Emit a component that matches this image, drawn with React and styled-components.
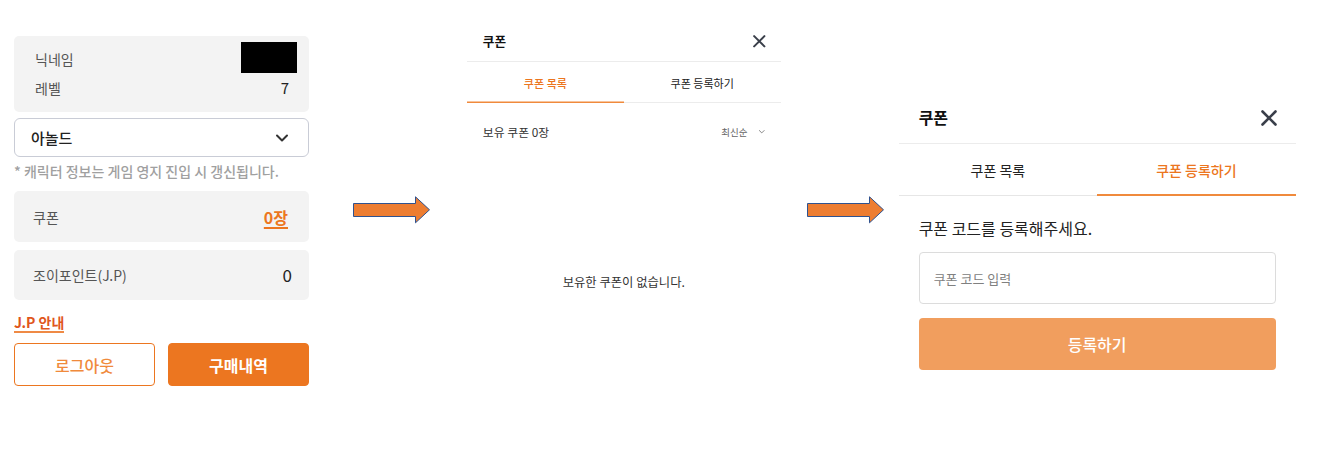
import styled, { createGlobalStyle } from 'styled-components';
import { X, ChevronDown } from 'lucide-react';

const ORANGE = '#ec7620';

const GlobalStyle = createGlobalStyle`
  html, body {
    margin: 0;
    padding: 0;
    background: #fff;
  }
  body {
    font-family: "Noto Sans CJK KR", "Noto Sans", sans-serif;
    color: #222;
  }
  * {
    box-sizing: border-box;
  }
`;

const Page = styled.div`
  display: flex;
  align-items: flex-start;
  width: 1321px;
  height: 456px;
  overflow: hidden;
`;

const Slot = styled.div`
  margin-top: ${(p) => p.$top}px;
  margin-left: ${(p) => p.$left}px;
  flex-shrink: 0;
`;

/* ---------- panel 1 : my info ---------- */

const InfoPanel = styled.div`
  width: 295px;
  display: flex;
  flex-direction: column;
`;

const GrayBox = styled.div`
  background: #f3f3f3;
  border-radius: 5px;
  padding: ${(p) => p.$pad || '0 18px 0 19px'};
  height: ${(p) => (p.$h ? `${p.$h}px` : 'auto')};
  margin-top: ${(p) => p.$mt || 0}px;
  display: flex;
  flex-direction: column;
  justify-content: center;
`;

const InfoRow = styled.div`
  display: flex;
  align-items: center;
  justify-content: space-between;
  height: ${(p) => p.$h || 29}px;
`;

const Label = styled.span`
  font-size: 14px;
  color: #555;
  line-height: 20px;
`;

const Value = styled.span`
  font-size: ${(p) => p.$size || 15}px;
  color: #222;
  line-height: 20px;
`;

const Redacted = styled.span`
  display: inline-block;
  width: 56px;
  height: 31px;
  background: #000;
  margin-right: -8px;
  margin-top: -2px;
`;

const Select = styled.div`
  margin-top: 6px;
  height: 39px;
  border: 1px solid #c9ccd6;
  border-radius: 6px;
  padding: 0 16px 0 16px;
  display: flex;
  align-items: center;
  justify-content: space-between;
  font-size: 15px;
  font-weight: 500;
  color: #222;
  svg {
    color: #333;
  }
`;

const Note = styled.p`
  margin: 4px 0 0;
  font-size: 14px;
  line-height: 20px;
  color: #a0a0a0;
  font-weight: 500;
`;

const CouponCount = styled.span`
  font-size: 16px;
  font-weight: 700;
  color: ${ORANGE};
  text-decoration: underline;
  text-underline-offset: 3px;
  text-decoration-thickness: 2px;
  line-height: 20px;
`;

const GuideLink = styled.span`
  align-self: flex-start;
  margin-top: 13px;
  font-size: 14px;
  font-weight: 700;
  line-height: 18px;
  color: #e0561c;
  border-bottom: 2px solid #ef8a45;
`;

const ButtonRow = styled.div`
  display: grid;
  grid-template-columns: 1fr 1fr;
  gap: 13px;
  margin-top: 10px;
`;

const ActionButton = styled.button`
  height: 43px;
  border-radius: 4px;
  font-family: inherit;
  font-size: 16px;
  cursor: pointer;
  border: 1px solid ${ORANGE};
  background: ${(p) => (p.$primary ? ORANGE : '#fff')};
  color: ${(p) => (p.$primary ? '#fff' : '#f08a3c')};
  font-weight: ${(p) => (p.$primary ? 700 : 500)};
`;

/* ---------- arrows ---------- */

const ArrowSvg = styled.svg`
  display: block;
`;

const Arrow = () => (
  <ArrowSvg width="78" height="28" viewBox="0 0 78 28">
    <path
      d="M0.5 7.5 H62.5 V0.8 L76.5 13.8 L62.5 26.8 V20.5 H0.5 Z"
      fill="#ed7d31"
      stroke="#2f528f"
      strokeWidth="1"
    />
  </ArrowSvg>
);

/* ---------- coupon modal ---------- */

const Modal = styled.div`
  width: 397px;
  background: #fff;
  zoom: ${(p) => p.$zoom || 1};
`;

const Header = styled.div`
  height: 51px;
  padding: 0 20px;
  display: flex;
  align-items: center;
  justify-content: space-between;
  border-bottom: 1px solid #ececec;
`;

const Title = styled.h2`
  margin: 0 0 2px;
  font-size: 16px;
  font-weight: 700;
  color: #111;
`;

const CloseButton = styled.button`
  border: 0;
  background: none;
  padding: 0;
  margin-right: -6px;
  display: flex;
  color: #3a3f4a;
  cursor: pointer;
`;

const Tabs = styled.div`
  display: grid;
  grid-template-columns: 1fr 1fr;
  height: 52px;
`;

const Tab = styled.div`
  display: flex;
  align-items: center;
  justify-content: center;
  font-size: 14px;
  font-weight: ${(p) => (p.$active ? 500 : 400)};
  color: ${(p) => (p.$active ? ORANGE : '#222')};
  box-shadow: inset 0 ${(p) => (p.$active ? '-2px 0 #f08a3c' : '-1px 0 #e6e6e6')};
`;

const SortRow = styled.div`
  display: flex;
  align-items: center;
  justify-content: space-between;
  padding: 20px 18px 0 20px;
  height: 52px;
`;

const Owned = styled.span`
  font-size: 15px;
  color: #333;
`;

const Sort = styled.span`
  display: flex;
  align-items: center;
  gap: 12px;
  font-size: 12px;
  color: #666;
`;

const Empty = styled.div`
  height: 348px;
  display: flex;
  align-items: center;
  justify-content: center;
  font-size: 15.6px;
  color: #333;
`;

const RegisterBody = styled.div`
  padding: 20px 20px 19px;
  display: flex;
  flex-direction: column;
`;

const Heading = styled.p`
  margin: 0;
  font-size: 16px;
  line-height: 24px;
  color: #222;
`;

const CodeInput = styled.input`
  margin-top: 12px;
  height: 52px;
  border: 1px solid #dcdcdc;
  border-radius: 4px;
  padding: 0 14px;
  font-family: inherit;
  font-size: 13px;
  outline: none;
  &::placeholder {
    color: #808080;
  }
`;

const SubmitButton = styled.button`
  margin-top: 14px;
  height: 52px;
  border: 0;
  border-radius: 4px;
  background: #f19e5e;
  color: #fff;
  font-family: inherit;
  font-size: 16px;
  font-weight: 500;
  cursor: pointer;
`;

const CouponModal = ({ tab, zoom }) => (
  <Modal $zoom={zoom}>
    <Header>
      <Title>쿠폰</Title>
      <CloseButton aria-label="닫기">
        <X size={26} strokeWidth={2.4} />
      </CloseButton>
    </Header>
    <Tabs>
      <Tab $active={tab === 'list'}>쿠폰 목록</Tab>
      <Tab $active={tab === 'register'}>쿠폰 등록하기</Tab>
    </Tabs>
    {tab === 'list' ? (
      <>
        <SortRow>
          <Owned>보유 쿠폰 0장</Owned>
          <Sort>
            최신순 <ChevronDown size={12} strokeWidth={2} />
          </Sort>
        </SortRow>
        <Empty>보유한 쿠폰이 없습니다.</Empty>
      </>
    ) : (
      <RegisterBody>
        <Heading>쿠폰 코드를 등록해주세요.</Heading>
        <CodeInput placeholder="쿠폰 코드 입력" />
        <SubmitButton>등록하기</SubmitButton>
      </RegisterBody>
    )}
  </Modal>
);

const App = () => (
  <>
    <GlobalStyle />
    <Page>
      <Slot $top={36} $left={14}>
        <InfoPanel>
          <GrayBox $pad="8px 20px 10px 21px">
            <InfoRow>
              <Label>닉네임</Label>
              <Redacted />
            </InfoRow>
            <InfoRow>
              <Label>레벨</Label>
              <Value>7</Value>
            </InfoRow>
          </GrayBox>
          <Select>
            아놀드
            <ChevronDown size={20} strokeWidth={2.4} />
          </Select>
          <Note>* 캐릭터 정보는 게임 영지 진입 시 갱신됩니다.</Note>
          <GrayBox $h={51} $mt={10} $pad="0 21px 0 19px">
            <InfoRow>
              <Label>쿠폰</Label>
              <CouponCount>0장</CouponCount>
            </InfoRow>
          </GrayBox>
          <GrayBox $h={50} $mt={8} $pad="0 17px 0 19px">
            <InfoRow>
              <Label>조이포인트(J.P)</Label>
              <Value $size={17}>0</Value>
            </InfoRow>
          </GrayBox>
          <GuideLink>J.P 안내</GuideLink>
          <ButtonRow>
            <ActionButton>로그아웃</ActionButton>
            <ActionButton $primary>구매내역</ActionButton>
          </ButtonRow>
        </InfoPanel>
      </Slot>
      <Slot $top={196} $left={44}>
        <Arrow />
      </Slot>
      <Slot $top={22} $left={36}>
        <CouponModal tab="list" zoom={0.79} />
      </Slot>
      <Slot $top={196} $left={26}>
        <Arrow />
      </Slot>
      <Slot $top={93} $left={14}>
        <CouponModal tab="register" />
      </Slot>
    </Page>
  </>
);

export default App;
